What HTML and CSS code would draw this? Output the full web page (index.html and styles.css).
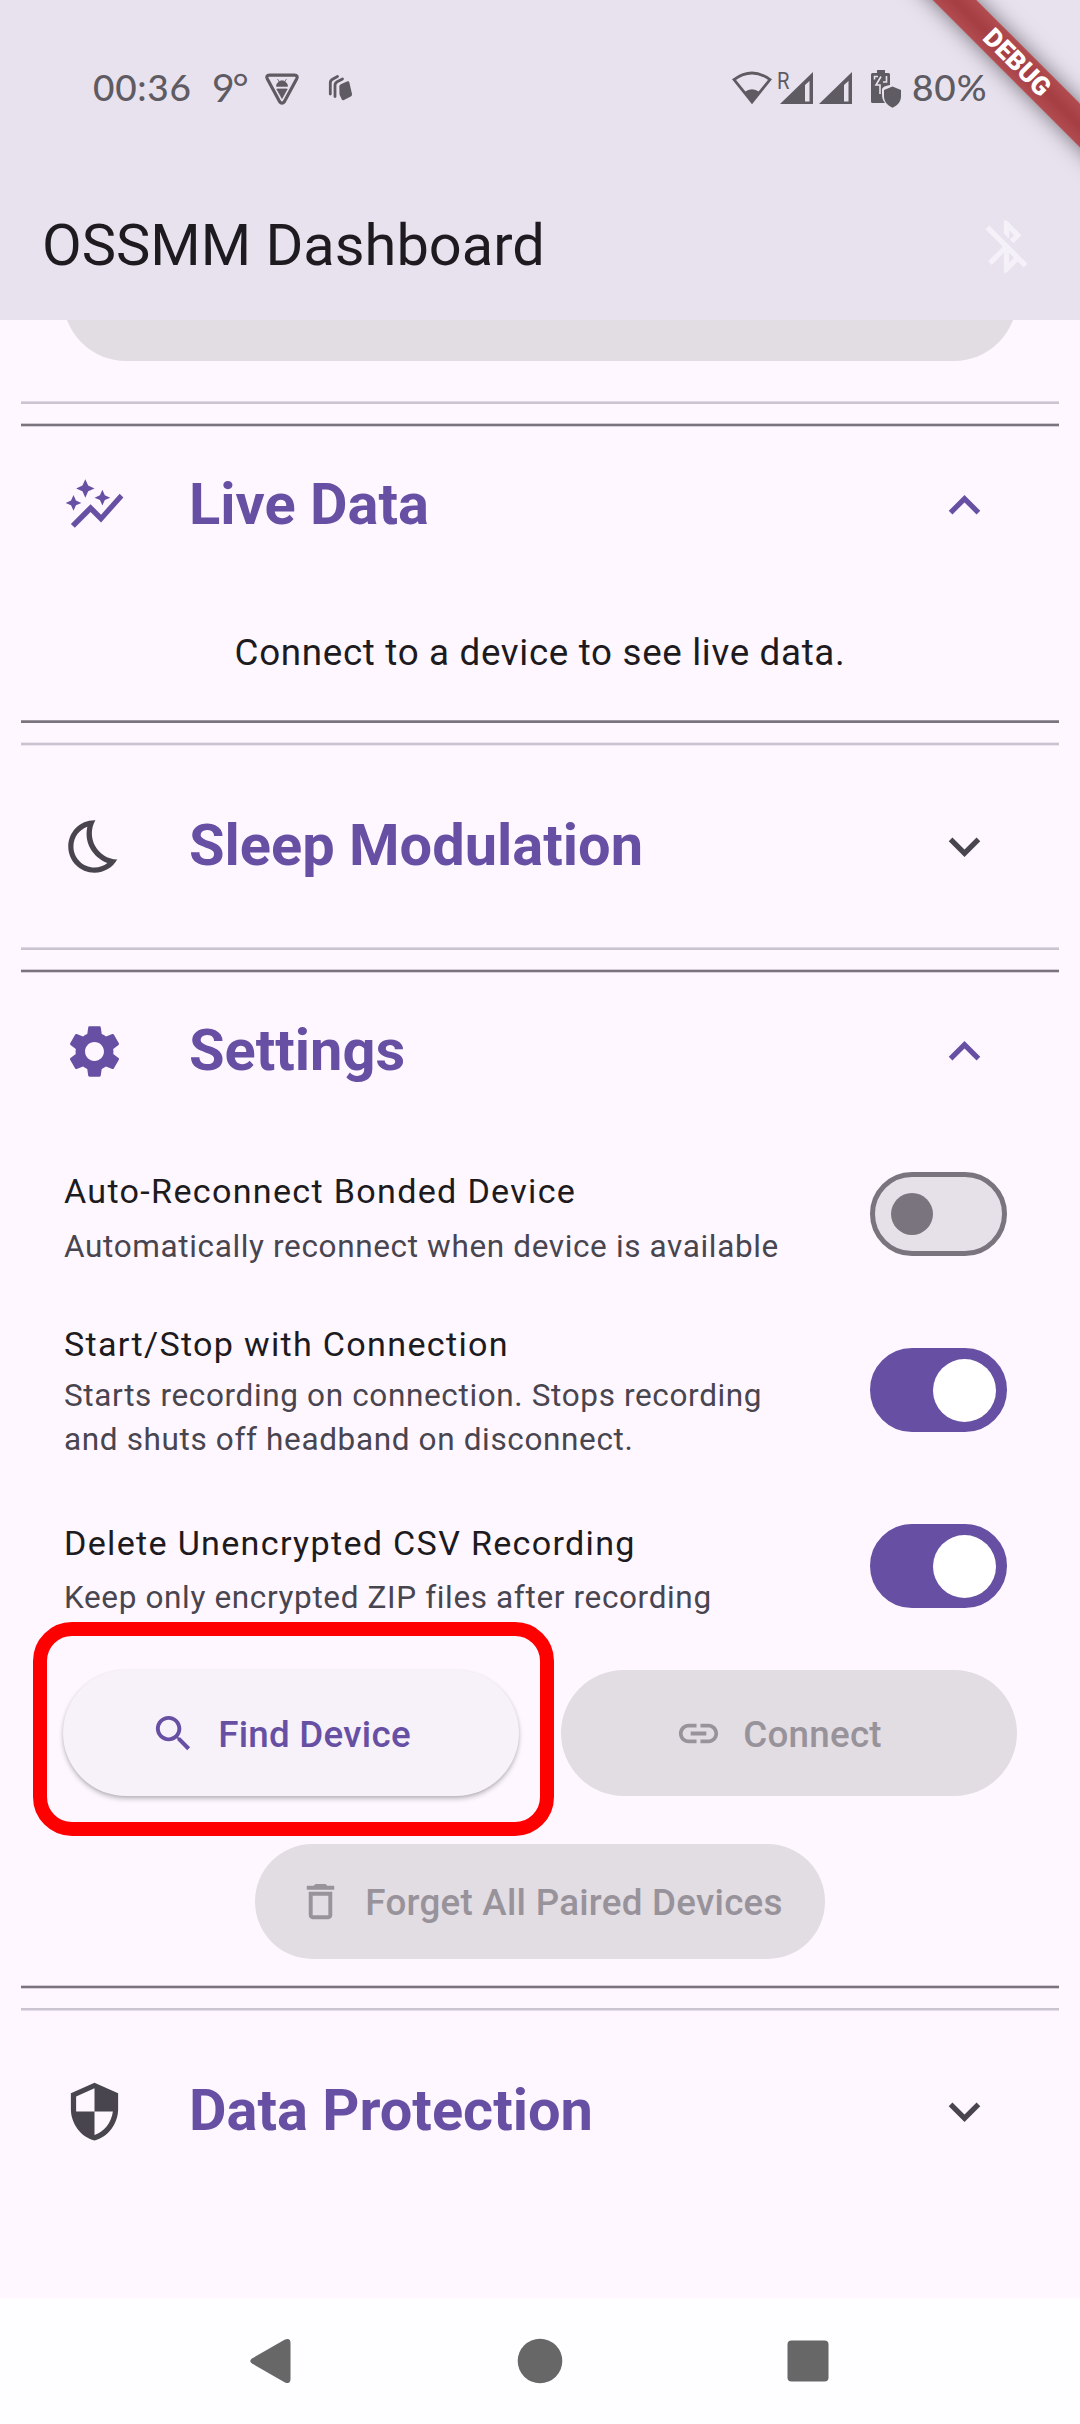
FILE: index.html
```html
<!DOCTYPE html>
<html lang="en">
<head>
<meta charset="utf-8">
<title>OSSMM Dashboard</title>
<link rel="stylesheet" href="styles.css">
</head>
<body>
<div class="screen">
  <header class="top">
    <div class="status">
      <span class="clock">00:36</span>
      <span class="temp">9°</span>
      <svg class="st-vpn" viewBox="0 0 36 34"><path d="M5.500 3.200H30.500Q34.500 3.200 32.600 7L20.500 29.500Q18 33 15.500 29.500L3.400 7Q1.500 3.200 5.500 3.200Z" fill="none" stroke="currentColor" stroke-width="3.200"/><path d="M12.500 14.300a5.500 5.500 0 0 1 11 0zM13.500 7l2 3M22.500 7l-2 3M12.800 17h10.400L18 26.500z" fill="currentColor" stroke="currentColor" stroke-width=".8"/></svg>
      <svg class="st-cards" viewBox="0 0 25 28"><g fill="none" stroke="currentColor" stroke-width="2.800" stroke-linecap="round"><path d="M2.300 20V9Q2.300 6.500 4.500 5.300L9.500 2.500"/><path d="M7 22.500V11.500Q7 9 9.200 7.800L14.500 5"/></g><path d="M11.300 12.500Q11.300 11 12.800 10.300L19.500 7.300Q21 6.800 21.300 8.300L24 20Q24.300 21.800 22.800 22.500L16 26Q14.300 26.800 13.700 25.200L11.500 20.500Z" fill="currentColor"/></svg>
      <span class="grow"></span>
      <svg class="st-wifi" viewBox="0 0 40 34"><path d="M2 8.600Q20-4.500 38 8.600L20 31Z" fill="none" stroke="currentColor" stroke-width="2.800"/><path d="M12.500 21Q20 15.500 27.500 21L20 32Z" fill="currentColor"/></svg>
      <svg class="st-signal" viewBox="0 0 75 34"><path fill-rule="evenodd" fill="currentColor" d="M2 33L35 1V33ZM27 14v16.500h4.500V10zM41 33L74 1V33ZM66 14v16.500h4.500V10z"/><text x="-1" y="17.500" class="roam" textLength="12.500" lengthAdjust="spacingAndGlyphs">R</text></svg>
      <svg class="st-batt" viewBox="0 0 32 40"><path d="M7 1h8v3h3.500q1.500 0 1.500 1.500V16q-7 1-8 4v5q0 6 3 9H2.500Q1 34 1 32.500V5.500Q1 4 2.500 4H7z" fill="currentColor"/><path d="M4.500 10.500V7.500H8M11 7.500L6 16h4V25M16.500 7v6H13" fill="none" stroke="#e8e2ef" stroke-width="1.600"/><path d="M22.500 17.500L31 21v6.500c0 5-3.500 9-8.500 11.300C17.500 36.500 14 32.500 14 27.500V21z" fill="currentColor"/></svg>
      <span class="pct">80%</span>
    </div>
    <div class="toolbar">
      <h1>OSSMM Dashboard</h1>
      <svg class="ic bt" viewBox="0 0 24 24"><path d="M13 5.830l1.880 1.880-1.600 1.600 1.410 1.410 3.020-3.020L12 2h-1v5.030l2 2v-3.200zM5.410 4L4 5.410 10.590 12 5 17.590 6.410 19 11 14.410V22h1l4.290-4.290 2.300 2.290L20 18.590 5.410 4zM13 18.170v-3.760l1.880 1.880L13 18.170z"/></svg>
    </div>
    <div class="banner-clip"><div class="banner">DEBUG</div></div>
  </header>

  <main class="content">
    <div class="peek"><div class="peek-btn"></div></div>
    <div class="rule light"></div>
    <section class="open">
      <div class="rule dark"></div>
      <div class="head">
        <svg class="ic on" viewBox="0 0 24 24"><path d="M14.060 9.940L12 9l2.060-.94L15 6l.94 2.060L18 9l-2.060.94L15 12l-.94-2.060zM4 14l.94-2.060L7 11l-2.060-.94L4 8l-.94 2.060L1 11l2.060.94L4 14zm4.500-5l1.090-2.410L12 5.500 9.590 4.410 8.500 2 7.410 4.410 5 5.500l2.410 1.090L8.500 9zm-4 11.500l6-6.010 4 4L23 8.930l-1.410-1.410-7.090 7.970-4-4L3 19l1.500 1.500z"/></svg>
        <h2>Live Data</h2>
        <svg class="ic on" viewBox="0 0 24 24"><path d="M12 8l-6 6 1.410 1.410L12 10.830l4.590 4.580L18 14z"/></svg>
      </div>
      <p class="hint">Connect to a device to see live data.</p>
      <div class="rule dark end"></div>
    </section>
    <section class="closed">
      <div class="rule light soft"></div>
      <div class="head tall">
        <svg class="ic" viewBox="0 0 24 24"><path d="M9.270 4.490c-1.630 7.540 3.750 12.410 7.660 13.800C15.540 19.380 13.810 20 11.980 20c-4.410 0-8-3.590-8-8C3.980 8.450 6.300 5.500 9.270 4.490M11.990 2.010C6.400 2.010 2 6.540 2 12c0 5.520 4.480 10 10 10 3.710 0 6.930-2.020 8.660-5.020-7.510-.25-12.090-8.430-8.320-14.970-.12 0-.23 0-.35 0z"/></svg>
        <h2>Sleep Modulation</h2>
        <svg class="ic" viewBox="0 0 24 24"><path d="M16.590 8.590L12 13.170 7.410 8.590 6 10l6 6 6-6z"/></svg>
      </div>
      <div class="rule light"></div>
    </section>
    <section class="open">
      <div class="rule dark"></div>
      <div class="head settings-head">
        <svg class="ic on" viewBox="0 0 24 24"><path d="M19.140 12.940c.04-.3.06-.61.06-.94 0-.32-.02-.64-.07-.94l2.030-1.580c.18-.14.23-.41.12-.61l-1.920-3.320c-.12-.22-.37-.29-.59-.22l-2.390.96c-.5-.38-1.030-.7-1.620-.94l-.36-2.540c-.04-.24-.24-.41-.48-.41h-3.840c-.24 0-.43.17-.47.41l-.36 2.540c-.59.24-1.130.57-1.620.94l-2.390-.96c-.22-.08-.47 0-.59.22L2.740 8.870c-.12.21-.08.47.12.61l2.030 1.580c-.05.3-.09.63-.09.94s.02.64.07.94l-2.030 1.580c-.18.14-.23.41-.12.61l1.920 3.320c.12.22.37.29.59.22l2.390-.96c.5.38 1.030.7 1.620.94l.36 2.540c.05.24.24.41.48.41h3.840c.24 0 .44-.17.47-.41l.36-2.540c.59-.24 1.130-.56 1.620-.94l2.390.96c.22.08.47 0 .59-.22l1.920-3.320c.12-.22.07-.47-.12-.61l-2.010-1.580zM12 15.600c-1.980 0-3.600-1.620-3.600-3.600s1.620-3.600 3.600-3.600 3.600 1.620 3.600 3.600-1.620 3.600-3.600 3.600z"/></svg>
        <h2>Settings</h2>
        <svg class="ic on" viewBox="0 0 24 24"><path d="M12 8l-6 6 1.410 1.410L12 10.830l4.590 4.580L18 14z"/></svg>
      </div>
      <div class="opt">
        <div class="opt-text"><h3>Auto-Reconnect Bonded Device</h3><p>Automatically reconnect when device is available</p></div>
        <span class="switch"></span>
      </div>
      <div class="opt two-line">
        <div class="opt-text"><h3>Start/Stop with Connection</h3><p>Starts recording on connection. Stops recording<br>and shuts off headband on disconnect.</p></div>
        <span class="switch checked"></span>
      </div>
      <div class="opt last">
        <div class="opt-text"><h3>Delete Unencrypted CSV Recording</h3><p>Keep only encrypted ZIP files after recording</p></div>
        <span class="switch checked"></span>
      </div>
      <div class="buttons">
        <button class="btn primary"><svg viewBox="0 0 24 24"><path d="M15.500 14h-.79l-.28-.27C15.410 12.590 16 11.110 16 9.500 16 5.910 13.090 3 9.500 3S3 5.910 3 9.500 5.910 16 9.500 16c1.610 0 3.090-.59 4.230-1.570l.27.28v.79l5 4.990L20.490 19l-4.990-5zm-6 0C7.010 14 5 11.990 5 9.500S7.010 5 9.500 5 14 7.010 14 9.500 11.990 14 9.500 14z"/></svg><span>Find Device</span></button>
        <button class="btn"><svg viewBox="0 0 24 24"><path d="M3.900 12c0-1.710 1.390-3.100 3.100-3.100h4V7H7c-2.760 0-5 2.240-5 5s2.240 5 5 5h4v-1.900H7c-1.710 0-3.100-1.390-3.100-3.100zM8 13h8v-2H8v2zm9-6h-4v1.900h4c1.710 0 3.100 1.390 3.100 3.100s-1.390 3.100-3.100 3.100h-4V17h4c2.760 0 5-2.240 5-5s-2.240-5-5-5z"/></svg><span>Connect</span></button>
        <div class="callout"></div>
      </div>
      <button class="btn forget"><svg viewBox="0 0 24 24"><path d="M6 19c0 1.100.9 2 2 2h8c1.100 0 2-.9 2-2V7H6v12zM8 9h8v10H8V9zm7.500-5l-1-1h-5l-1 1H5v2h14V4z"/></svg><span>Forget All Paired Devices</span></button>
      <div class="rule dark"></div>
    </section>
    <section class="closed">
      <div class="rule light low"></div>
      <div class="head tall">
        <svg class="ic" viewBox="0 0 24 24"><path d="M12 1L3 5v6c0 5.550 3.840 10.740 9 12 5.160-1.260 9-6.450 9-12V5l-9-4zm0 10.990h7c-.53 4.120-3.280 7.790-7 8.940V12H5V6.300l7-3.110v8.800z"/></svg>
        <h2>Data Protection</h2>
        <svg class="ic" viewBox="0 0 24 24"><path d="M16.590 8.590L12 13.170 7.410 8.590 6 10l6 6 6-6z"/></svg>
      </div>
    </section>
  </main>

  <nav class="nav">
    <svg viewBox="0 0 46 46"><path d="M4 20.500L37 1.500Q42.500-.5 42.500 5V41Q42.500 46.500 37 44.500L4 25.500Q.5 23 4 20.500Z"/></svg>
    <svg viewBox="0 0 46 46"><circle cx="23" cy="23" r="22.300"/></svg>
    <svg viewBox="0 0 46 46"><rect x="2.500" y="2.500" width="41" height="41" rx="4"/></svg>
  </nav>
</div>
</body>
</html>
```

FILE: styles.css
```css
* { box-sizing: border-box; margin: 0; padding: 0; }

body {
  width: 1080px;
  height: 2424px;
  overflow: hidden;
  font-family: Roboto, sans-serif;
  background: #fef7ff;
  color: #1d1b20;
}

.screen { display: flex; flex-direction: column; height: 2424px; }

/* App bar */
.top { position: relative; flex: none; height: 320px; background: #e8e2ef; }
.status {
  display: flex;
  align-items: center;
  height: 173px;
  padding: 0 91px 0 93px;
  color: #5f5b62;
  font-family: Lato, sans-serif;
}
.status svg { flex: none; display: block; overflow: visible; }
.grow { flex: 1; }
.clock { width: 119px; font-size: 37px; font-weight: 500; line-height: 46px; letter-spacing: .7px; }
.temp { width: 52px; font-size: 39px; line-height: 46px; letter-spacing: -2px; }
.st-vpn { width: 36px; height: 34px; margin-top: 4px; }
.st-cards { width: 25px; height: 28px; margin: 3px 0 0 28px; }
.st-wifi { width: 40px; height: 34px; margin-top: 3px; }
.st-signal { width: 75px; height: 34px; margin: 3px 0 0 6px; }
.st-batt { width: 32px; height: 40px; margin: 5px 10px 0 17px; }
.pct { width: 77px; font-size: 37px; font-weight: 500; line-height: 46px; letter-spacing: .9px; white-space: nowrap; }
.roam { font: 23px Roboto, sans-serif; fill: currentColor; }

.toolbar {
  display: flex;
  align-items: center;
  justify-content: space-between;
  height: 147px;
  padding: 0 42px 0 42px;
}
.toolbar h1 { font-size: 57.75px; font-weight: 400; line-height: 74px; margin-top: -4px; }

.banner-clip { position: absolute; top: 0; right: 0; width: 190px; height: 190px; overflow: hidden; }
.banner {
  position: absolute;
  left: -23px;
  top: 47px;
  width: 300px;
  height: 31px;
  transform: rotate(45deg);
  background: linear-gradient(#b14c50, #a63f43 45%, #a63f43 55%, #b14c50);
  box-shadow: 0 0 21px rgba(0, 0, 0, .5);
  color: #fff;
  font-size: 26px;
  font-weight: 900;
  line-height: 31px;
  text-align: center;
}

/* Icons */
.ic { flex: none; display: block; width: 63px; height: 63px; fill: #49454f; }
.ic.on { fill: #6750a4; }
.ic.bt { fill: #f4f1f8; }

/* Expandable sections */
.content { flex: 1; padding: 0 21px; overflow: hidden; }
.peek { height: 81px; padding: 0 42px; overflow: hidden; }
.peek-btn { height: 126px; margin-top: -85px; border-radius: 63px; background: #e2dce3; }
section { margin-top: 19px; }

.rule.light { height: 3px; background: linear-gradient(#ded8e4 1px, #cac4d0 1px); }
.rule.light.soft { height: 4px; background: linear-gradient(#ece5ef 1px, #cac4d0 1px 3px, #ece5ef 3px); }
.rule.light.low { background: linear-gradient(#cac4d0 2px, #e4dde9 2px); }
.rule.dark { height: 4px; background: linear-gradient(#d0cad4 1px, #79747e 1px 3px, #d6d0da 3px); }
.rule.dark.end { height: 3px; background: linear-gradient(#9c97a1 1px, #79747e 1px); }

.head { display: flex; align-items: center; height: 157px; padding: 0 63px 0 42px; }
.head.tall { height: 201px; }
.head.settings-head { height: 153px; padding-top: 4px; }
.head h2 {
  flex: 1;
  padding-left: 63px;
  margin-top: -4px;
  font-size: 57.75px;
  font-weight: 700;
  line-height: 74px;
  color: #6750a4;
}
.hint { margin: 43px 0 41px; font-size: 36.75px; line-height: 52px; letter-spacing: .67px; text-align: center; }

/* Switch rows */
.opt { display: flex; justify-content: space-between; height: 176px; padding: 0 52px 0 43px; }
.opt-text { padding-top: 40px; }
.opt h3 { font-size: 34.125px; font-weight: 400; line-height: 50px; letter-spacing: 1.3px; }
.opt p { margin-top: 9px; font-size: 31.5px; line-height: 44px; letter-spacing: .64px; color: #49454f; }
.opt.two-line .opt-text { padding-top: 17px; }
.opt.two-line p { margin-top: 5px; }
.opt.last p { margin-top: 8px; }

.switch {
  display: flex;
  align-items: center;
  align-self: center;
  width: 137px;
  height: 84px;
  padding-left: 16px;
  border: 5px solid #79747e;
  border-radius: 42px;
  background: #e6e0e9;
}
.switch::before { content: ""; width: 42px; height: 42px; border-radius: 50%; background: #79747e; }
.switch.checked { padding-left: 58px; border-color: #6750a4; background: #6750a4; }
.switch.checked::before { width: 63px; height: 63px; background: #fff; }

/* Buttons */
.buttons { position: relative; display: flex; gap: 42px; margin: 16px 42px 48px; }
.btn {
  display: flex;
  flex: 1;
  align-items: center;
  justify-content: center;
  gap: 21px;
  height: 126px;
  padding-right: 21px;
  border: 0;
  border-radius: 63px;
  background: #e2dce3;
  color: #98939a;
  font: 500 36.75px/52px Roboto, sans-serif;
  letter-spacing: .2625px;
}
.btn span { padding-top: 3px; }
.btn svg { width: 47px; height: 47px; fill: currentColor; }
.btn.primary {
  background: #f7f2fa;
  color: #6750a4;
  box-shadow: 0 3px 5px rgba(0, 0, 0, .22), 0 1px 3px rgba(0, 0, 0, .1);
}
.btn.forget { width: 570px; height: 115px; margin: 0 auto 26px; padding-right: 0; }
.callout {
  position: absolute;
  left: -30px;
  top: -48px;
  width: 521px;
  height: 214px;
  border: 14px solid #f00;
  border-radius: 39px;
}

/* System navigation */
.nav {
  display: flex;
  flex: none;
  align-items: center;
  justify-content: space-between;
  height: 126px;
  padding: 0 249px 0 248px;
  background: #fefdff;
}
.nav svg { width: 46px; height: 46px; fill: #676767; }
```
